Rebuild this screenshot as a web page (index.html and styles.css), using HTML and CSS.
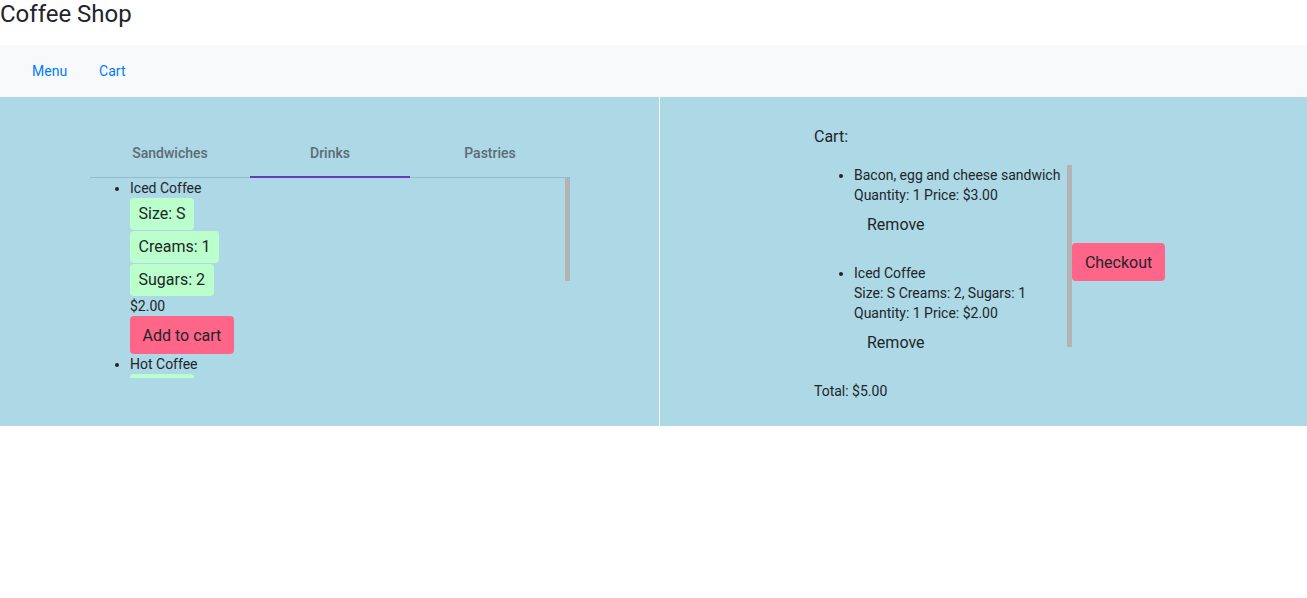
FILE: index.html
```html
<!DOCTYPE html>
<html>
<head>
<meta charset="utf-8">
<link rel="stylesheet" href="styles.css">
</head>
<body>
<header class="site-header">Coffee Shop</header>
<nav class="navbar">
  <a class="nav-link" href="#">Menu</a>
  <a class="nav-link" href="#">Cart</a>
</nav>
<main class="main">
  <section class="menu-panel">
    <div class="tabs">
      <div class="tab">Sandwiches</div>
      <div class="tab tab-active">Drinks</div>
      <div class="tab">Pastries</div>
    </div>
    <div class="menu-scroll">
      <ul class="menu-list">
        <li class="menu-item">
          <div class="item-name">Iced Coffee</div>
          <div class="option">Size: S</div>
          <div class="option">Creams: 1</div>
          <div class="option">Sugars: 2</div>
          <div class="item-price">$2.00</div>
          <button class="pink-btn">Add to cart</button>
        </li>
        <li class="menu-item">
          <div class="item-name">Hot Coffee</div>
          <div class="option">Size: S</div>
          <div class="option">Creams: 0</div>
          <div class="option">Sugars: 0</div>
          <div class="item-price">$2.00</div>
          <button class="pink-btn">Add to cart</button>
        </li>
      </ul>
      <div class="scroll-thumb"></div>
    </div>
  </section>
  <section class="cart-panel">
    <div class="cart-title">Cart:</div>
    <div class="cart-row">
      <ul class="cart-list">
        <li class="cart-item">
          <div class="cart-line">Bacon, egg and cheese sandwich</div>
          <div class="cart-line">Quantity: 1 Price: $3.00</div>
          <button class="remove-btn">Remove</button>
        </li>
        <li class="cart-item">
          <div class="cart-line">Iced Coffee</div>
          <div class="cart-line">Size: S Creams: 2, Sugars: 1</div>
          <div class="cart-line">Quantity: 1 Price: $2.00</div>
          <button class="remove-btn">Remove</button>
        </li>
      </ul>
      <button class="pink-btn checkout">Checkout</button>
    </div>
    <div class="cart-total">Total: $5.00</div>
  </section>
</main>
</body>
</html>
```
FILE: styles.css
```css
* { box-sizing: border-box; }
body {
  margin: 0;
  font-family: Roboto, "Liberation Sans", Arial, sans-serif;
  color: #212529;
  background: #fff;
}
.site-header {
  height: 45px;
  font-size: 24px;
  line-height: 28px;
}
.navbar {
  height: 52px;
  background: #f8f9fa;
  display: flex;
  align-items: center;
  padding-left: 16px;
}
.nav-link {
  color: #007bff;
  text-decoration: none;
  font-size: 14px;
  padding: 0 16px;
}
.main {
  display: flex;
  background: #add8e6;
}
.menu-panel {
  width: 660px;
  border-right: 1px solid #fff;
  padding: 33px 0 47px 90px;
}
.tabs {
  display: flex;
  width: 480px;
  border-bottom: 1px solid #93bccb;
}
.tab {
  width: 160px;
  height: 48px;
  display: flex;
  align-items: center;
  justify-content: center;
  font-size: 14px;
  font-weight: 500;
  color: #5d6b77;
  border-bottom: 2px solid transparent;
  margin-bottom: -1px;
}
.tab-active {
  border-bottom-color: #673ab7;
}
.menu-scroll {
  position: relative;
  width: 480px;
  height: 200px;
  overflow: hidden;
}
.scroll-thumb {
  position: absolute;
  top: 0;
  right: 0;
  width: 5px;
  height: 103px;
  background: #b3b3b3;
}
.menu-list {
  margin: 0;
  padding: 0 0 38px 40px;
  font-size: 14px;
}
.menu-item { line-height: 20px; }
.item-name { height: 20px; }
.option {
  display: table;
  background: #bbffcc;
  font-size: 16px;
  line-height: 32px;
  padding: 0 8.5px;
  border-radius: 4px;
  margin-bottom: 1px;
}
.item-price {
  line-height: 19px;
}
.pink-btn {
  display: block;
  background: #ff6489;
  border: none;
  border-radius: 4px;
  font-family: inherit;
  font-size: 16px;
  color: #212529;
  height: 38px;
  padding: 0 12.5px;
}
.cart-panel {
  flex: 1;
  padding: 30px 0 25px 154px;
}
.cart-title {
  font-size: 16px;
  line-height: 19px;
}
.cart-row {
  display: flex;
  align-items: center;
  margin-top: 19px;
}
.cart-list {
  margin: 0;
  padding: 0 7px 0 40px;
  height: 182px;
  overflow: visible;
  border-right: 5px solid #b3b3b3;
  font-size: 14px;
  line-height: 20px;
}
.cart-item { margin-bottom: 20px; }
.remove-btn {
  display: block;
  background: transparent;
  border: none;
  font-family: inherit;
  font-size: 16px;
  color: #212529;
  height: 38px;
  padding: 0 13px;
}
.checkout { margin-top: 12px; }
.cart-total {
  font-size: 14px;
  line-height: 20px;
  margin-top: 34px;
}
```
